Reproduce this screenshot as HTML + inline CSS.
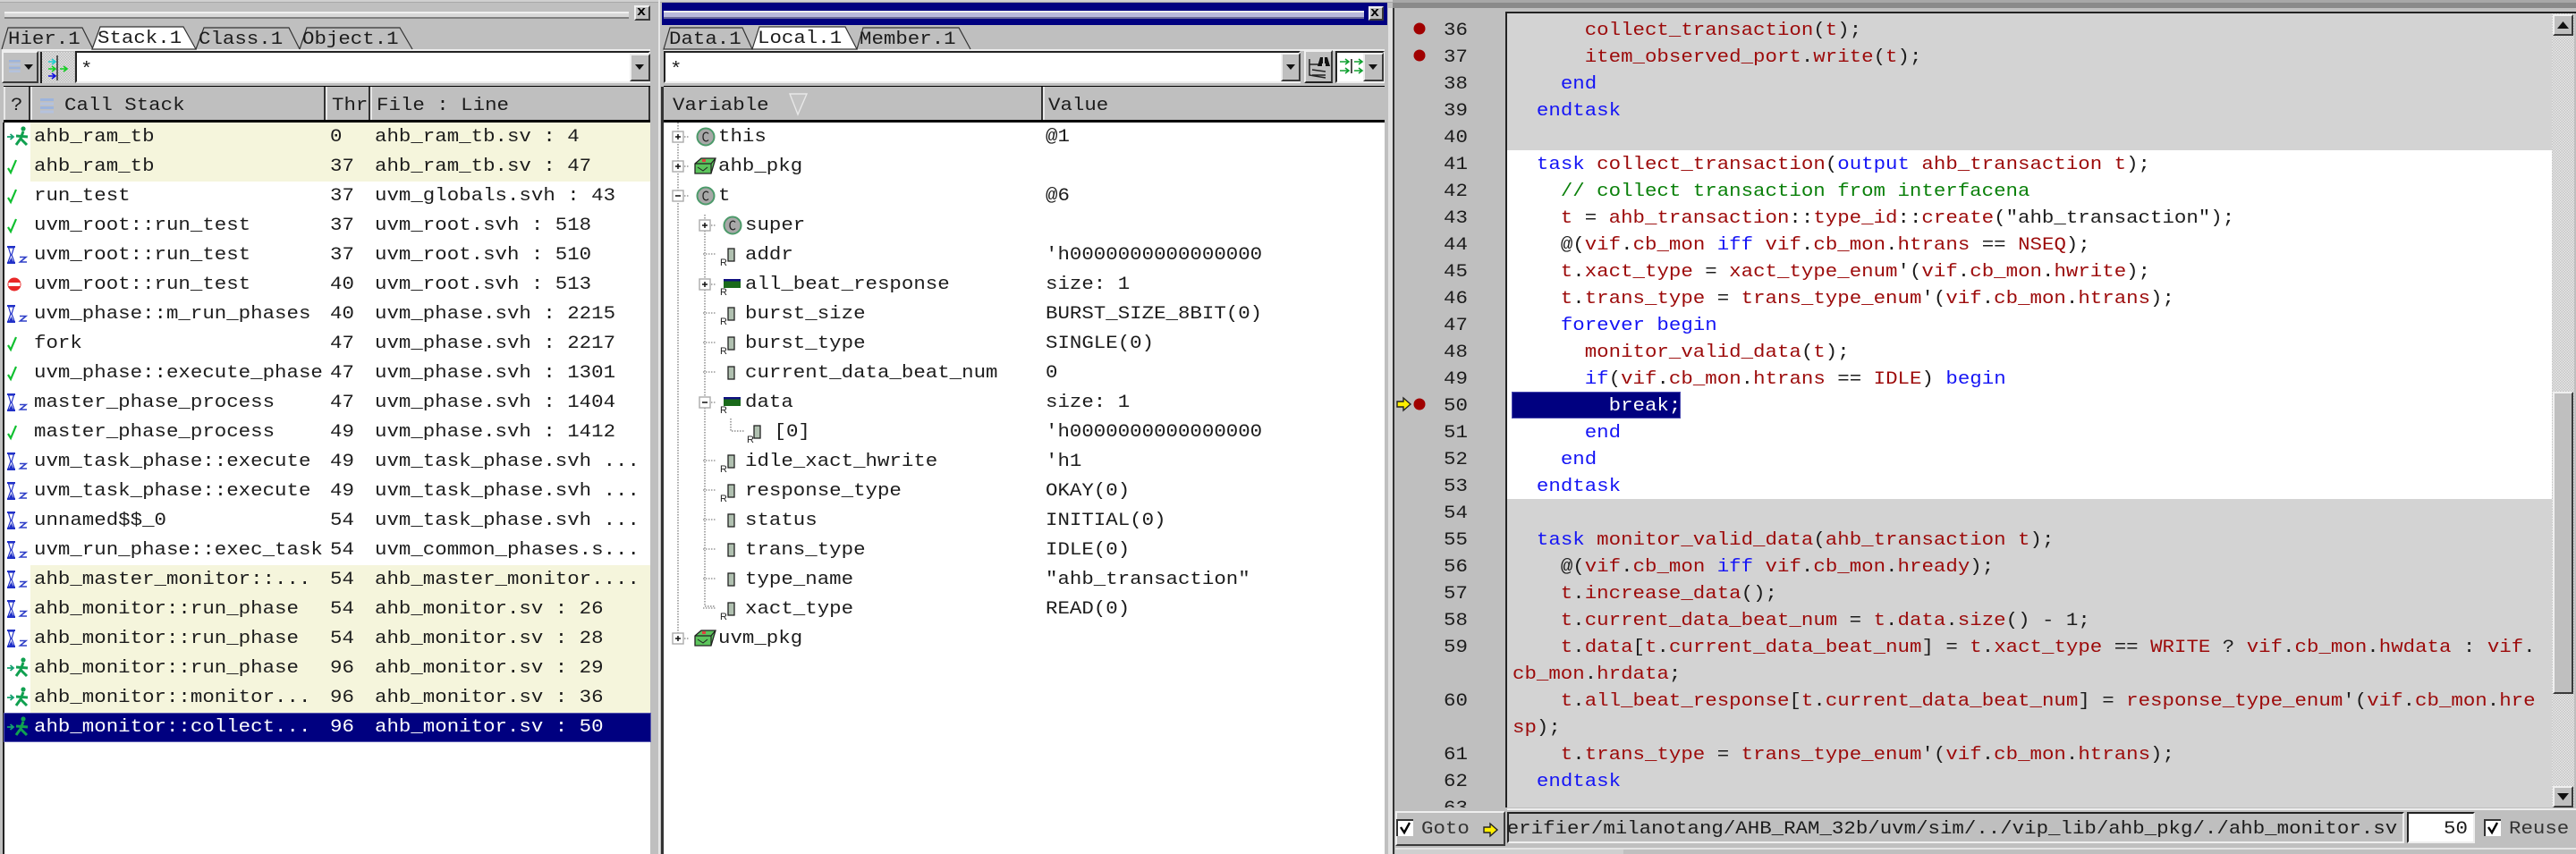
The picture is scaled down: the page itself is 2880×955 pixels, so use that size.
<!DOCTYPE html>
<html><head><meta charset="utf-8"><title>Debugger</title>
<style>
html,body{margin:0;padding:0;width:2880px;height:955px;overflow:hidden;background:#bfbfbf}
div,pre,svg{position:absolute;box-sizing:border-box}
pre,.t{margin:0;font-family:"Liberation Mono",monospace;font-size:20px;white-space:pre;color:#1c1c1c;transform:scaleX(1.1208);transform-origin:0 0;filter:blur(.3px)}
.l33{line-height:33px}
.l30{line-height:30px}
.code{color:#9c0a0a}
.code i{font-style:normal;color:#1c1c1c}
.code b{font-weight:normal;color:#1414f5}
.code em{font-style:normal;color:#0a800a}
.code span{color:#fff}
.up{border:2px solid;border-color:#efefef #3a3a3a #3a3a3a #efefef;background:#bfbfbf}
.in{border:2px solid;border-color:#222 #eee #eee #222;background:#fff}
.hd{background:#bfbfbf;border-left:2px solid #e8e8e8;border-right:2px solid #333;height:37px;top:97px}
.tab{line-height:25px;height:25px;top:32px}
.bar{background:#000;height:2px}
</style></head><body>

<!-- top strips -->
<div style="left:0;top:0;width:2880px;height:3px;background:#a8a8a8"></div>
<div style="left:1557px;top:3px;width:1323px;height:6px;background:#8a8a8a"></div>
<div style="left:0;top:0;width:1557px;height:2px;background:#d0d0d0"></div>

<!-- LEFT PANEL -->
<div style="left:5px;top:13px;width:698px;height:8px;background:#d8d8d8;border-top:2px solid #f0f0f0;border-bottom:2px solid #808080"></div>
<div class="up" style="left:709px;top:6px;width:18px;height:17px"></div>
<div class="t" style="left:712px;top:3px;line-height:22px;font-weight:bold;font-size:15px;color:#000">x</div>

<div style="left:2px;top:55px;width:725px;height:2px;background:#eee"></div>
<svg style="left:0;top:28px" width="480" height="30"><path d="M2 27L9 3H92L104 27" fill="none" stroke="#333" stroke-width="1.2"/><path d="M103 27L112 2H205L219 27Z" fill="#fff" stroke="#333" stroke-width="1.2"/><path d="M219 27L228 3H323L335 27" fill="none" stroke="#333" stroke-width="1.2"/><path d="M335 27L343 3H447L461 27" fill="none" stroke="#333" stroke-width="1.2"/></svg>
<div class="t tab" style="left:9px">Hier.1</div>
<div class="t tab" style="left:109px;top:31px">Stack.1</div>
<div class="t tab" style="left:222px">Class.1</div>
<div class="t tab" style="left:338px">Object.1</div>

<div class="up" style="left:2px;top:57px;width:41px;height:36px"></div>
<div style="left:45px;top:58px;width:38px;height:35px;background:repeating-conic-gradient(#bdbdbd 0 25%,#e2e2e2 0 50%) 0 0/3px 3px;border-left:2px solid #222"></div>
<div class="in" style="left:84px;top:57px;width:643px;height:36px"></div>
<div class="up" style="left:704px;top:60px;width:23px;height:31px"></div>
<div class="t" style="left:90px;top:62px;line-height:33px">*</div>

<div class="bar" style="left:4px;top:96px;width:723px"></div>
<div class="hd" style="left:4px;width:30px"></div>
<div class="hd" style="left:34px;width:330px"></div>
<div class="hd" style="left:364px;width:50px"></div>
<div class="hd" style="left:414px;width:313px"></div>
<div class="bar" style="left:4px;top:134px;width:723px;height:3px"></div>
<div class="t" style="left:12px;top:102px;line-height:33px">?</div>
<div class="t" style="left:72px;top:102px;line-height:33px">Call Stack</div>
<div class="t" style="left:371px;top:102px;line-height:33px">Thr</div>
<div class="t" style="left:421px;top:102px;line-height:33px">File : Line</div>

<div style="left:3px;top:137px;width:2px;height:818px;background:#222"></div>
<div style="left:5px;top:137px;width:722px;height:818px;background:#fff"></div>
<div style="left:34px;top:137px;width:693px;height:66px;background:#f5f5dc"></div>
<div style="left:34px;top:632px;width:693px;height:165px;background:#f5f5dc"></div>
<div style="left:4px;top:797px;width:724px;height:33px;background:#000080;border:1px solid #5a5ab0"></div>

<pre class="l33" style="left:38px;top:137px">ahb_ram_tb
ahb_ram_tb
run_test
uvm_root::run_test
uvm_root::run_test
uvm_root::run_test
uvm_phase::m_run_phases
fork
uvm_phase::execute_phase
master_phase_process
master_phase_process
uvm_task_phase::execute
uvm_task_phase::execute
unnamed$$_0
uvm_run_phase::exec_task
ahb_master_monitor::...
ahb_monitor::run_phase
ahb_monitor::run_phase
ahb_monitor::run_phase
ahb_monitor::monitor...
<span style="color:#fff">ahb_monitor::collect...</span></pre>
<pre class="l33" style="left:369px;top:137px">0
37
37
37
37
40
40
47
47
47
49
49
49
54
54
54
54
54
96
96
<span style="color:#fff">96</span></pre>
<pre class="l33" style="left:419px;top:137px">ahb_ram_tb.sv : 4
ahb_ram_tb.sv : 47
uvm_globals.svh : 43
uvm_root.svh : 518
uvm_root.svh : 510
uvm_root.svh : 513
uvm_phase.svh : 2215
uvm_phase.svh : 2217
uvm_phase.svh : 1301
uvm_phase.svh : 1404
uvm_phase.svh : 1412
uvm_task_phase.svh ...
uvm_task_phase.svh ...
uvm_task_phase.svh ...
uvm_common_phases.s...
ahb_master_monitor....
ahb_monitor.sv : 26
ahb_monitor.sv : 28
ahb_monitor.sv : 29
ahb_monitor.sv : 36
<span style="color:#fff">ahb_monitor.sv : 50</span></pre>

<!-- MIDDLE PANEL -->
<div style="left:736px;top:0;width:2px;height:955px;background:#e6e6e6"></div>
<div style="left:739px;top:97px;width:3px;height:858px;background:#333"></div>
<div style="left:740px;top:3px;width:811px;height:25px;background:#000080"></div>
<div style="left:742px;top:12px;width:783px;height:9px;background:#b8b8dc;border-top:2px solid #eee;border-bottom:2px solid #6a6a9a"></div>
<div class="up" style="left:1530px;top:7px;width:17px;height:16px"></div>
<div class="t" style="left:1532px;top:4px;line-height:22px;font-weight:bold;font-size:15px;color:#000">x</div>

<div style="left:742px;top:55px;width:806px;height:2px;background:#eee"></div>
<svg style="left:740px;top:28px" width="360" height="30"><path d="M2 27L9 3H90L101 27Z" fill="none" stroke="#333" stroke-width="1.2"/><path d="M101 27L109 2H205L218 27Z" fill="#fff" stroke="#333" stroke-width="1.2"/><path d="M218 27L225 3H332L345 27" fill="none" stroke="#333" stroke-width="1.2"/></svg>
<div class="t tab" style="left:748px">Data.1</div>
<div class="t tab" style="left:847px;top:31px">Local.1</div>
<div class="t tab" style="left:961px">Member.1</div>

<div class="in" style="left:742px;top:57px;width:712px;height:36px"></div>
<div class="up" style="left:1432px;top:59px;width:22px;height:32px"></div>
<div class="t" style="left:749px;top:62px;line-height:33px">*</div>
<div class="up" style="left:1458px;top:56px;width:32px;height:37px;border-bottom-color:#222"></div>
<div class="in" style="left:1493px;top:57px;width:55px;height:36px"></div>
<div class="up" style="left:1524px;top:59px;width:23px;height:32px"></div>

<div class="bar" style="left:742px;top:96px;width:806px"></div>
<div class="hd" style="left:742px;width:424px;border-left:0"></div>
<div class="hd" style="left:1166px;width:382px;border-right:0"></div>
<div class="bar" style="left:742px;top:134px;width:806px;height:3px"></div>
<div class="t" style="left:752px;top:102px;line-height:33px">Variable</div>
<div class="t" style="left:1172px;top:102px;line-height:33px">Value</div>

<div style="left:742px;top:137px;width:806px;height:818px;background:#fff"></div>

<pre class="l33" style="left:803px;top:137px">this
ahb_pkg
t














uvm_pkg</pre>
<pre class="l33" style="left:833px;top:236px">super
addr
all_beat_response
burst_size
burst_type
current_data_beat_num
data
<span style="margin-left:29px">[0]</span>
idle_xact_hwrite
response_type
status
trans_type
type_name
xact_type</pre>
<pre class="l33" style="left:1169px;top:137px">@1

@6

'h0000000000000000
size: 1
BURST_SIZE_8BIT(0)
SINGLE(0)
0
size: 1
'h0000000000000000
'h1
OKAY(0)
INITIAL(0)
IDLE(0)
"ahb_transaction"
READ(0)</pre>

<!-- RIGHT PANEL -->
<div style="left:1552px;top:9px;width:5px;height:946px;background:#e0e0e0"></div>
<div style="left:1557px;top:9px;width:2px;height:946px;background:#333"></div>
<div style="left:1683px;top:13px;width:1197px;height:2px;background:#222"></div>
<div style="left:1683px;top:13px;width:2px;height:890px;background:#222"></div>
<div style="left:1559px;top:9px;width:124px;height:894px;overflow:hidden">
<pre class="l30" style="left:55px;top:11px">36
37
38
39
40
41
42
43
44
45
46
47
48
49
50
51
52
53
54
55
56
57
58
59

60

61
62
63</pre></div>

<div style="left:1685px;top:15px;width:1168px;height:888px;background:#d3d3d3;overflow:hidden">
<div style="left:0;top:153px;width:1168px;height:390px;background:#fff"></div>
<div style="left:5px;top:423px;width:189px;height:30px;background:#000080;border:1px solid #4a4ab0"></div>
<pre class="l30 code" style="left:6px;top:5px">      collect_transaction<i>(</i>t<i>);</i>
      item_observed_port<i>.</i>write<i>(</i>t<i>);</i>
    <b>end</b>
  <b>endtask</b>

  <b>task</b> collect_transaction<i>(</i><b>output</b> ahb_transaction t<i>);</i>
    <em>// collect transaction from interfacena</em>
    t <i>=</i> ahb_transaction<i>::</i>type_id<i>::</i>create<i>("ahb_transaction");</i>
    <i>@(</i>vif<i>.</i>cb_mon <b>iff</b> vif<i>.</i>cb_mon<i>.</i>htrans <i>==</i> NSEQ<i>);</i>
    t<i>.</i>xact_type <i>=</i> xact_type_enum<i>'(</i>vif<i>.</i>cb_mon<i>.</i>hwrite<i>);</i>
    t<i>.</i>trans_type <i>=</i> trans_type_enum<i>'(</i>vif<i>.</i>cb_mon<i>.</i>htrans<i>);</i>
    <b>forever begin</b>
      monitor_valid_data<i>(</i>t<i>);</i>
      <b>if</b><i>(</i>vif<i>.</i>cb_mon<i>.</i>htrans <i>==</i> IDLE<i>)</i> <b>begin</b>
        <span>break;</span>
      <b>end</b>
    <b>end</b>
  <b>endtask</b>

  <b>task</b> monitor_valid_data<i>(</i>ahb_transaction t<i>);</i>
    <i>@(</i>vif<i>.</i>cb_mon <b>iff</b> vif<i>.</i>cb_mon<i>.</i>hready<i>);</i>
    t<i>.</i>increase_data<i>();</i>
    t<i>.</i>current_data_beat_num <i>=</i> t<i>.</i>data<i>.</i>size<i>() - 1;</i>
    t<i>.</i>data<i>[</i>t<i>.</i>current_data_beat_num<i>] =</i> t<i>.</i>xact_type <i>==</i> WRITE <i>?</i> vif<i>.</i>cb_mon<i>.</i>hwdata <i>:</i> vif<i>.</i>
cb_mon<i>.</i>hrdata<i>;</i>
    t<i>.</i>all_beat_response<i>[</i>t<i>.</i>current_data_beat_num<i>] =</i> response_type_enum<i>'(</i>vif<i>.</i>cb_mon<i>.</i>hre
sp<i>);</i>
    t<i>.</i>trans_type <i>=</i> trans_type_enum<i>'(</i>vif<i>.</i>cb_mon<i>.</i>htrans<i>);</i>
  <b>endtask</b></pre></div>

<!-- scrollbar -->
<div style="left:2853px;top:15px;width:25px;height:888px;background:repeating-conic-gradient(#c4c4c4 0 25%,#e8e8e8 0 50%) 0 0/3px 3px"></div>
<div class="up" style="left:2854px;top:16px;width:23px;height:24px"></div>
<div class="up" style="left:2854px;top:438px;width:23px;height:338px"></div>
<div class="up" style="left:2854px;top:879px;width:23px;height:24px"></div>

<!-- bottom bar -->
<div style="left:1685px;top:904px;width:1195px;height:2px;background:#eee"></div>
<div class="up" style="left:1560px;top:907px;width:123px;height:39px"></div>
<div class="t" style="left:1589px;top:911px;line-height:33px;color:#333">Goto</div>
<div style="left:1685px;top:908px;width:1003px;height:35px;background:#bfbfbf;border:2px solid;border-color:#222 #eee #eee #222;overflow:hidden">
<pre style="right:6px;left:auto;top:1px;line-height:33px;transform-origin:100% 0">erifier/milanotang/AHB_RAM_32b/uvm/sim/../vip_lib/ahb_pkg/./ahb_monitor.sv</pre></div>
<div class="in" style="left:2691px;top:908px;width:76px;height:35px"></div>
<div class="t" style="left:2732px;top:911px;line-height:33px">50</div>
<div class="t" style="left:2805px;top:911px;line-height:33px;color:#333">Reuse</div>
<div style="left:1560px;top:948px;width:1320px;height:2px;background:#e4e4e4"></div>
<div style="left:1560px;top:950px;width:255px;height:5px;background:#cfcfcf"></div>

<!-- ICONS -->
<svg style="left:0;top:0;pointer-events:none" width="2880" height="955" viewBox="0 0 2880 955">
<defs>
<g id="run"><path d="M0 0h6M3.5-3L7 0 3.5 3" fill="none" stroke="#14a070" stroke-width="1.8"/><circle cx="18" cy="-9" r="2.6" fill="#10a050"/><path d="M18-6L15 2 10 9M15 2L22 9M10-1L23 0" fill="none" stroke="#10a050" stroke-width="3"/></g>
<g id="chk"><path d="M1 2L4 7 10-7" fill="none" stroke="#10c030" stroke-width="2.2"/></g>
<g id="hg"><path d="M0-9H9M0 9H9" stroke="#2030c8" stroke-width="2"/><path d="M1.5-8H7.5L5 0 8 8H1L4 0Z" fill="#fff" stroke="#2030c8" stroke-width="1.2"/><path d="M2 8H7L4.5 3Z" fill="#2030c8"/><path d="M14 2.5H21L14.5 8H22" fill="none" stroke="#3040c8" stroke-width="1.6"/></g>
<g id="stp"><circle cx="8" cy="0" r="7.5" fill="#e82828"/><rect x="1.5" y="-2" width="13" height="4" fill="#fff"/></g>
<g id="stk"><rect x="0" y="0" width="15" height="3" fill="#9db4dc"/><rect x="0" y="4.5" width="15" height="3" fill="#b4c2dc"/><rect x="0" y="9" width="15" height="3" fill="#9db4dc"/><rect x="0" y="13.5" width="15" height="3" fill="#b4c2dc"/></g>
<g id="plus"><rect x="0" y="-6" width="12" height="12" fill="#fff" stroke="#aaa" stroke-width="1.4"/><path d="M3 0H9M6-3V3" stroke="#111" stroke-width="1.5"/><path d="M13 0H18" stroke="#666" stroke-width="1" stroke-dasharray="1.5 1.5"/></g>
<g id="minus"><rect x="0" y="-6" width="12" height="12" fill="#fff" stroke="#aaa" stroke-width="1.4"/><path d="M3 0H9" stroke="#111" stroke-width="1.5"/><path d="M13 0H18" stroke="#666" stroke-width="1" stroke-dasharray="1.5 1.5"/></g>
<g id="cls"><ellipse cx="10" cy="0" rx="9.5" ry="9.5" fill="#a8a8a8" stroke="#4c9a6a" stroke-width="2"/><path d="M13-3.5C11-6 7-5 7 0S11 6 13 3.5" fill="none" stroke="#222" stroke-width="1.3"/></g>
<g id="pkg"><path d="M1-3L8-9H24L19 8H1Z" fill="#5cc45c" stroke="#222" stroke-width="1.3"/><path d="M1-3H19L24-9M19-3V8" fill="none" stroke="#222" stroke-width="1.2"/><path d="M4 1L10 5 15 1" fill="none" stroke="#222" stroke-width="1"/><rect x="9" y="-8" width="4" height="3" fill="#e04040"/></g>
<g id="var"><rect x="8" y="-7" width="7" height="14" fill="#b0c0b0" stroke="#222" stroke-width="1.3"/><path d="M-8 0H6" stroke="#666" stroke-width="1" stroke-dasharray="1.5 1.5" transform="translate(-12 -1)"/></g>
<g id="rl"><text x="0" y="12" font-family="Liberation Sans,sans-serif" font-size="11" fill="#222">R</text></g>
<g id="arr"><rect x="0" y="-5" width="19" height="9" fill="#1a6a1a"/><rect x="0" y="-6" width="19" height="2.5" fill="#101080"/></g>
<g id="arw"><path d="M0-3H7V-7L15 0 7 7V3H0Z" fill="#ffee00" stroke="#222" stroke-width="1.4"/></g>
<g id="dn"><path d="M-5-3H5L0 3Z" fill="#111"/></g>
<g id="bk"><rect x="0" y="0" width="18" height="18" fill="#fff"/><path d="M0 18V0H18" fill="none" stroke="#333" stroke-width="2"/><path d="M4 8L8 14 14 3" fill="none" stroke="#000" stroke-width="2.4"/></g>
</defs>

<!-- left status icons -->
<use href="#run" x="8" y="153"/><use href="#chk" x="8" y="186"/><use href="#chk" x="8" y="219"/><use href="#chk" x="8" y="252"/>
<use href="#hg" x="8" y="285"/><use href="#stp" x="8" y="318"/><use href="#hg" x="8" y="351"/><use href="#chk" x="8" y="384"/>
<use href="#chk" x="8" y="417"/><use href="#hg" x="8" y="450"/><use href="#chk" x="8" y="483"/><use href="#hg" x="8" y="516"/>
<use href="#hg" x="8" y="549"/><use href="#hg" x="8" y="582"/><use href="#hg" x="8" y="615"/><use href="#hg" x="8" y="648"/>
<use href="#hg" x="8" y="681"/><use href="#hg" x="8" y="714"/><use href="#run" x="8" y="747"/><use href="#run" x="8" y="780"/><use href="#run" x="8" y="813"/>
<!-- headers / toolbar -->
<use href="#stk" x="45" y="110"/>
<g transform="translate(10,67) scale(.85)"><use href="#stk"/></g>
<use href="#dn" x="32" y="75"/>
<path d="M54 69H62M58 66L62 69 58 72" fill="none" stroke="#20d0d0" stroke-width="1.6"/>
<path d="M54 77H62M58 74L62 77 58 80M67 77H75M71 74L75 77 71 80" fill="none" stroke="#10d020" stroke-width="1.6"/>
<path d="M54 85H62M58 82L62 85 58 88" fill="none" stroke="#1010e0" stroke-width="1.6"/>
<path d="M64 62V90" stroke="#222" stroke-width="1.4"/>
<use href="#dn" x="715" y="75"/><use href="#dn" x="1443" y="75"/><use href="#dn" x="1535" y="75"/>
<path d="M883 105H902L892 128Z" fill="#c4c4c4" stroke="#e8e8e8" stroke-width="1.4"/>
<path d="M1464 66V84L1482 87M1464 72H1474M1467 78L1482 80M1467 84L1482 84" fill="none" stroke="#222" stroke-width="1.5"/>
<path d="M1473 74L1476 64H1479V71H1481V64H1484L1487 74H1482V71H1478V74Z" fill="#111"/>
<path d="M1498 69H1508M1504 66L1508 69 1504 72M1498 79H1508M1504 76L1508 79 1504 82M1514 69H1523M1519 66L1523 69 1519 72M1514 79H1523M1519 76L1523 79 1519 82" fill="none" stroke="#10a030" stroke-width="1.6"/>
<path d="M1511 66V82" stroke="#222" stroke-width="1.6"/>

<!-- tree -->
<path d="M758 137V714" stroke="#555" stroke-width="1" stroke-dasharray="1.5 1.5"/>
<path d="M788 240V678H800" fill="none" stroke="#555" stroke-width="1" stroke-dasharray="1.5 1.5"/>
<path d="M817 468V482H832" fill="none" stroke="#555" stroke-width="1" stroke-dasharray="1.5 1.5"/>
<use href="#plus" x="752" y="153"/><use href="#cls" x="779" y="153"/>
<use href="#plus" x="752" y="186"/><use href="#pkg" x="776" y="186"/>
<use href="#minus" x="752" y="219"/><use href="#cls" x="779" y="219"/>
<use href="#plus" x="782" y="252"/><use href="#cls" x="809" y="252"/>
<use href="#var" x="806" y="285"/><use href="#rl" x="805" y="285"/>
<use href="#plus" x="782" y="318"/><use href="#arr" x="809" y="318"/><use href="#rl" x="805" y="318"/>
<use href="#var" x="806" y="351"/><use href="#rl" x="805" y="351"/>
<use href="#var" x="806" y="384"/><use href="#rl" x="805" y="384"/>
<use href="#var" x="806" y="417"/>
<use href="#minus" x="782" y="450"/><use href="#arr" x="809" y="450"/><use href="#rl" x="805" y="450"/>
<g transform="translate(836,483)"><rect x="7" y="-7" width="7" height="14" fill="#b0c0b0" stroke="#222" stroke-width="1.3"/></g><use href="#rl" x="835" y="483"/>
<use href="#var" x="806" y="516"/><use href="#rl" x="805" y="516"/>
<use href="#var" x="806" y="549"/><use href="#rl" x="805" y="549"/>
<use href="#var" x="806" y="582"/><use href="#var" x="806" y="615"/><use href="#var" x="806" y="648"/>
<use href="#var" x="806" y="681"/><use href="#rl" x="805" y="681"/>
<use href="#plus" x="752" y="714"/><use href="#pkg" x="776" y="714"/>

<!-- breakpoints -->
<ellipse cx="1587" cy="32" rx="6.5" ry="6.5" fill="#a00000"/>
<ellipse cx="1587" cy="62" rx="6.5" ry="6.5" fill="#a00000"/>
<ellipse cx="1587" cy="452" rx="6.5" ry="6.5" fill="#a00000"/>
<use href="#arw" x="1562" y="452"/>
<use href="#arw" x="1659" y="928"/>
<use href="#bk" x="1562" y="917"/>
<use href="#bk" x="2778" y="917"/>
<path d="M2859 32H2872L2865.5 24Z" fill="#111"/>
<path d="M2859 887H2872L2865.5 895Z" fill="#111"/>
</svg>
</body></html>
